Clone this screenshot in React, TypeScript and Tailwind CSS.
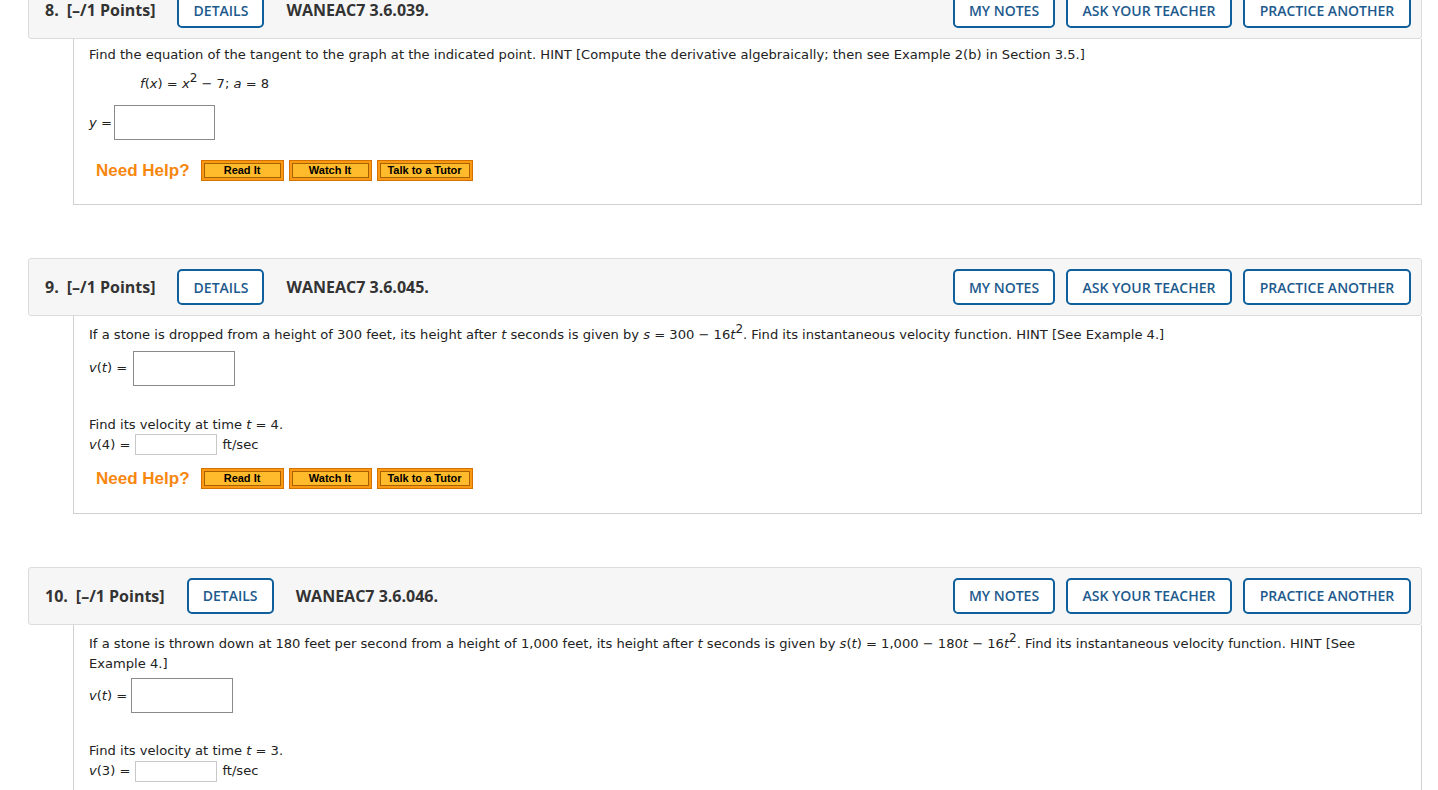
import type { ReactNode } from "react";

const body = "font-['DejaVu_Sans',Verdana,sans-serif] text-[13.1px] text-[#222]";

function OutlineButton({ label, width }: { label: string; width: string }) {
    return (
        <span
            className={`flex h-[36px] items-center justify-center rounded-[5px] border-2 border-[#0f5f9c] bg-white text-[14px] font-semibold text-[#1d5a8d] ${width}`}
        >
            {label}
        </span>
    );
}

function HelpButton({ label, width }: { label: string; width: string }) {
    return (
        <span className={`flex h-[21px] border border-[#d27300] bg-[#fb9a12] p-[2px] ${width}`}>
            <span className="flex flex-1 items-center justify-center border border-[#a86100] bg-[#ffbb2c] font-['Liberation_Sans',Arial,sans-serif] text-[11px] font-bold leading-none text-black">
                {label}
            </span>
        </span>
    );
}

function NeedHelp() {
    return (
        <div className="flex h-[21px] items-center pl-[7px]">
            <span className="mr-[11px] font-['Liberation_Sans',Arial,sans-serif] text-[17px] font-bold leading-none text-[#f7870f]">
                Need Help?
            </span>
            <HelpButton label="Read It" width="w-[83px]" />
            <span className="w-[5px]" />
            <HelpButton label="Watch It" width="w-[83px]" />
            <span className="w-[5px]" />
            <HelpButton label="Talk to a Tutor" width="w-[96px]" />
        </div>
    );
}

function BigInput({ width = "w-[101px]" }: { width?: string }) {
    return <span className={`inline-block h-[35px] border border-[#8a8a8a] bg-white ${width}`} />;
}

function SmallInput() {
    return <span className="inline-block h-[21px] w-[82px] border border-[#c8c8c8] bg-white" />;
}

function Header({ num, code, first }: { num: string; code: string; first?: boolean }) {
    return (
        <div
            className={`ml-[28px] flex h-[58px] w-[1394px] items-center rounded-[3px] border border-[#dcdcdc] bg-[#f6f6f6] pl-[16px] pr-[10px] font-['Open_Sans',sans-serif] text-[#333] ${
                first ? "mt-[-19px]" : "mt-[53px]"
            }`}
        >
            <span className="text-[16px] font-bold">{num}</span>
            <span className="ml-[8px] text-[16px] font-bold">[–/1 Points]</span>
            <span className="ml-[22px]">
                <OutlineButton label="DETAILS" width="w-[87px]" />
            </span>
            <span className="ml-[22px] text-[16px] font-bold">{code}</span>
            <span className="flex-1" />
            <OutlineButton label="MY NOTES" width="w-[102px]" />
            <span className="w-[11px]" />
            <OutlineButton label="ASK YOUR TEACHER" width="w-[166px]" />
            <span className="w-[11px]" />
            <OutlineButton label="PRACTICE ANOTHER" width="w-[168px]" />
        </div>
    );
}

function Body({ children, pb }: { children: ReactNode; pb: string }) {
    return (
        <div
            className={`ml-[73px] w-[1349px] border-x border-b border-[#d0d0d0] bg-white pl-[15px] pr-[40px] ${pb} ${body}`}
        >
            {children}
        </div>
    );
}

const I = ({ children }: { children: ReactNode }) => <i>{children}</i>;
const Sup = ({ children }: { children: ReactNode }) => (
    <sup className="relative top-[-1px] align-super text-[12px] leading-none">{children}</sup>
);

export default function App() {
    return (
        <div className="min-h-[790px] w-[1438px] overflow-hidden bg-white">
            <Header num="8." code="WANEAC7 3.6.039." first />
            <Body pb="pb-[23px]">
                <p className="pt-[6px] leading-[20px]">
                    Find the equation of the tangent to the graph at the indicated point. HINT [Compute the
                    derivative algebraically; then see Example 2(b) in Section 3.5.]
                </p>
                <p className="mt-[8px] pl-[51px] leading-[20px]">
                    <I>f</I>(<I>x</I>) = <I>x</I>
                    <Sup>2</Sup> − 7; <I>a</I> = 8
                </p>
                <div className="mt-[11px] flex items-center">
                    <span className="mr-[2px]">
                        <I>y</I> =
                    </span>
                    <BigInput width="w-[101px]" />
                </div>
                <div className="mt-[20px]">
                    <NeedHelp />
                </div>
            </Body>

            <Header num="9." code="WANEAC7 3.6.045." />
            <Body pb="pb-[24px]">
                <p className="pt-[8px] leading-[20px]">
                    If a stone is dropped from a height of 300 feet, its height after <I>t</I> seconds is given by{" "}
                    <I>s</I> = 300 − 16<I>t</I>
                    <Sup>2</Sup>. Find its instantaneous velocity function. HINT [See Example 4.]
                </p>
                <div className="mt-[5px] flex items-center">
                    <span className="mr-[6px]">
                        <I>v</I>(<I>t</I>) =
                    </span>
                    <BigInput width="w-[102px]" />
                </div>
                <p className="mt-[29px] leading-[20px]">
                    Find its velocity at time <I>t</I> = 4.
                </p>
                <div className="flex h-[20px] items-center">
                    <span className="mr-[5px]">
                        <I>v</I>(4) =
                    </span>
                    <SmallInput />
                    <span className="ml-[5px]">ft/sec</span>
                </div>
                <div className="mt-[13px]">
                    <NeedHelp />
                </div>
            </Body>

            <Header num="10." code="WANEAC7 3.6.046." />
            <Body pb="pb-[40px]">
                <p className="pt-[8px] leading-[20px]">
                    If a stone is thrown down at 180 feet per second from a height of 1,000 feet, its height after{" "}
                    <I>t</I> seconds is given by <I>s</I>(<I>t</I>) = 1,000 − 180<I>t</I> − 16<I>t</I>
                    <Sup>2</Sup>. Find its instantaneous velocity function. HINT [See Example 4.]
                </p>
                <div className="mt-[4px] flex items-center">
                    <span className="mr-[4px]">
                        <I>v</I>(<I>t</I>) =
                    </span>
                    <BigInput width="w-[102px]" />
                </div>
                <p className="mt-[28px] leading-[20px]">
                    Find its velocity at time <I>t</I> = 3.
                </p>
                <div className="flex h-[20px] items-center">
                    <span className="mr-[5px]">
                        <I>v</I>(3) =
                    </span>
                    <SmallInput />
                    <span className="ml-[5px]">ft/sec</span>
                </div>
            </Body>
        </div>
    );
}
